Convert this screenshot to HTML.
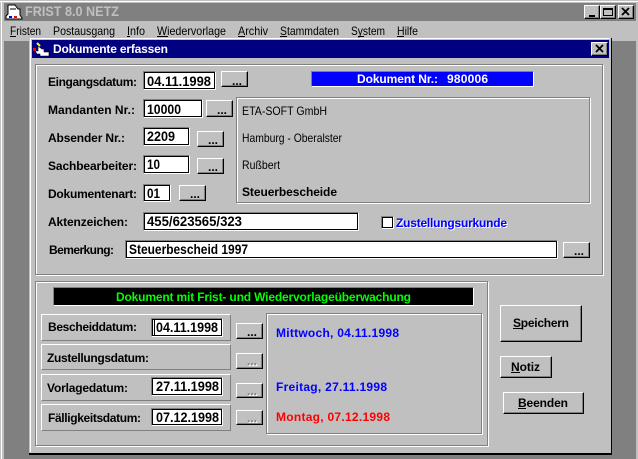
<!DOCTYPE html>
<html><head><meta charset="utf-8"><style>
html,body{margin:0;padding:0;width:638px;height:459px;overflow:hidden;background:#c0c0c0}
div{position:absolute;box-sizing:border-box}
.in{background:#fff;border:1px solid;border-color:#808080 #fff #fff #808080;box-shadow:inset 1px 1px 0 #000,inset -1px -1px 0 #000}
.btn{background:#c0c0c0;border:1px solid;border-color:#fff #000 #000 #fff;box-shadow:inset -1px -1px 0 #808080}
.pn{border:1px solid;border-color:#fff #808080 #808080 #fff}
.gr{border:1px solid #808080;box-shadow:1px 1px 0 #fff,inset 1px 1px 0 #fff}
svg{position:absolute;left:0;top:0}
text{font-family:"Liberation Sans",sans-serif;font-size:12px;fill:#000;white-space:pre}
.b{font-weight:bold}
.d{font-weight:bold;font-size:14px}
.bl{fill:#00f}.re{fill:#f00}.wh{fill:#fff}.gy{fill:#808080}
</style></head><body>
<div style="left:0;top:1px;width:638px;height:1px;background:#fff"></div>
<div style="left:1px;top:1px;width:1px;height:458px;background:#fff"></div>
<div style="left:4px;top:3px;width:632px;height:18px;background:#808080"></div>
<div style="left:4px;top:41px;width:632px;height:418px;background:#808080"></div>

<div class="btn" style="left:584px;top:5px;width:16px;height:14px"></div>
<div class="btn" style="left:600px;top:5px;width:16px;height:14px"></div>
<div class="btn" style="left:618px;top:5px;width:16px;height:14px"></div>

<div style="left:29px;top:38px;width:583px;height:417px;background:#c0c0c0;border-right:1px solid #000;border-bottom:2px solid #000"></div>
<div style="left:30px;top:38px;width:580px;height:414px;border-left:1px solid #fff;border-top:1px solid #fff"></div>
<div style="left:32px;top:40px;width:577px;height:18px;background:#000080"></div>
<div class="btn" style="left:591px;top:42px;width:17px;height:14px"></div>

<div class="gr" style="left:35px;top:64px;width:568px;height:211px"></div>
<div class="gr" style="left:35px;top:281px;width:453px;height:165px"></div>
<div class="gr" style="left:236px;top:97px;width:354px;height:106px"></div>

<div style="left:311px;top:71px;width:223px;height:16px;background:#00f;border:1px solid;border-color:#808080 #fff #fff #808080"></div>

<div class="in" style="left:143px;top:71px;width:73px;height:19px"></div>
<div class="btn" style="left:221px;top:71px;width:27px;height:16px"></div>
<div class="in" style="left:143px;top:99px;width:60px;height:19px"></div>
<div class="btn" style="left:206px;top:100px;width:27px;height:17px"></div>
<div class="in" style="left:143px;top:127px;width:47px;height:19px"></div>
<div class="btn" style="left:197px;top:131px;width:27px;height:16px"></div>
<div class="in" style="left:143px;top:155px;width:47px;height:19px"></div>
<div class="btn" style="left:197px;top:158px;width:27px;height:16px"></div>
<div class="in" style="left:143px;top:184px;width:28px;height:18px"></div>
<div class="btn" style="left:179px;top:185px;width:27px;height:16px"></div>
<div class="in" style="left:143px;top:212px;width:216px;height:19px"></div>
<div class="in" style="left:381px;top:216px;width:13px;height:13px"></div>
<div class="in" style="left:125px;top:240px;width:433px;height:19px"></div>
<div class="btn" style="left:563px;top:242px;width:27px;height:16px"></div>

<div style="left:53px;top:287px;width:421px;height:19px;background:#000;border:1px solid;border-color:#808080 #fff #fff #808080"></div>

<div class="pn" style="left:41px;top:314px;width:190px;height:27px"></div>
<div class="pn" style="left:41px;top:344px;width:190px;height:26px"></div>
<div class="pn" style="left:41px;top:374px;width:190px;height:27px"></div>
<div class="pn" style="left:41px;top:404px;width:190px;height:27px"></div>
<div class="in" style="left:151px;top:318px;width:72px;height:19px"></div>
<div class="in" style="left:151px;top:377px;width:72px;height:19px"></div>
<div class="in" style="left:151px;top:408px;width:72px;height:18px"></div>
<div style="left:154px;top:320px;width:1px;height:15px;background:#000"></div>
<div class="btn" style="left:236px;top:323px;width:27px;height:16px"></div>
<div class="btn" style="left:236px;top:353px;width:27px;height:16px"></div>
<div class="btn" style="left:236px;top:383px;width:27px;height:15px"></div>
<div class="btn" style="left:236px;top:410px;width:27px;height:15px"></div>
<div class="gr" style="left:266px;top:313px;width:216px;height:121px"></div>

<div class="btn" style="left:500px;top:305px;width:82px;height:37px"></div>
<div class="btn" style="left:500px;top:356px;width:52px;height:22px"></div>
<div class="btn" style="left:503px;top:392px;width:81px;height:22px"></div>

<svg width="638" height="459" viewBox="0 0 638 459">
<!-- main icon -->
<path d="M8 5h7l3 4h2v6l2 3v1H6v-3l2-2z" fill="#fff" stroke="#000" stroke-width="1"/>
<path d="M9 16h3v2H9z" fill="#00f"/><path d="M14 16h3v2h-3z" fill="#f00"/>
<path d="M10 9h6" stroke="#000"/>
<!-- dialog icon -->
<path d="M38 46l4 3h2v3h5v4h-9v-2h-3l-2-3h3z" fill="#fff" stroke="#000" stroke-width=".6"/>
<path d="M37 43l3 3" stroke="#ff0" stroke-width="2"/>
<path d="M33 48h3v3h-3z" fill="#f00"/>
<!-- caption glyphs -->
<rect x="589" y="15" width="6" height="2" fill="#000"/>
<path d="M603.5 8.500h9v7h-9z" fill="none" stroke="#000"/><rect x="603" y="8" width="10" height="2"/>
<path d="M622 8l7 7M629 8l-7 7" stroke="#000" stroke-width="1.800" fill="none"/>
<path d="M596 45l7 7M603 45l-7 7" stroke="#000" stroke-width="1.800" fill="none"/>

<text x="25" y="16" class="d" style="fill:#c0c0c0" textLength="94" lengthAdjust="spacingAndGlyphs">FRIST 8.0 NETZ</text>
<text x="10" y="35" textLength="31" lengthAdjust="spacingAndGlyphs">Fristen</text>
<text x="53" y="35" textLength="62" lengthAdjust="spacingAndGlyphs">Postausgang</text>
<text x="127" y="35" textLength="18" lengthAdjust="spacingAndGlyphs">Info</text>
<text x="157" y="35" textLength="69" lengthAdjust="spacingAndGlyphs">Wiedervorlage</text>
<text x="238" y="35" textLength="30" lengthAdjust="spacingAndGlyphs">Archiv</text>
<text x="280" y="35" textLength="59" lengthAdjust="spacingAndGlyphs">Stammdaten</text>
<text x="351" y="35" textLength="34" lengthAdjust="spacingAndGlyphs">System</text>
<text x="397" y="35" textLength="21" lengthAdjust="spacingAndGlyphs">Hilfe</text>
<g fill="#000">
<rect x="10" y="36" width="6" height="1"/><rect x="127" y="36" width="3" height="1"/><rect x="157" y="36" width="11" height="1"/><rect x="238" y="36" width="7" height="1"/><rect x="280" y="36" width="7" height="1"/><rect x="358" y="36" width="6" height="1"/><rect x="397" y="36" width="7" height="1"/>
<rect x="513" y="328" width="10" height="1"/><rect x="511" y="372" width="9" height="1"/><rect x="518" y="408" width="8" height="1"/>
</g>
<text x="53" y="53" class="b wh" textLength="115">Dokumente erfassen</text>

<text x="48" y="86" class="b" textLength="89">Eingangsdatum:</text>
<text x="48" y="114" class="b" textLength="87">Mandanten Nr.:</text>
<text x="48" y="142" class="b" textLength="77">Absender Nr.:</text>
<text x="48" y="170" class="b" textLength="89">Sachbearbeiter:</text>
<text x="48" y="198" class="b" textLength="89">Dokumentenart:</text>
<text x="48" y="226" class="b" textLength="80">Aktenzeichen:</text>
<text x="49" y="254" class="b" textLength="65">Bemerkung:</text>

<text x="147" y="86" class="d" textLength="64" lengthAdjust="spacingAndGlyphs">04.11.1998</text>
<text x="147" y="114" class="d" textLength="34" lengthAdjust="spacingAndGlyphs">10000</text>
<text x="147" y="141" class="d" textLength="28" lengthAdjust="spacingAndGlyphs">2209</text>
<text x="147" y="169" class="d" textLength="13" lengthAdjust="spacingAndGlyphs">10</text>
<text x="147" y="198" class="d" textLength="13" lengthAdjust="spacingAndGlyphs">01</text>
<text x="147" y="226" class="d" textLength="95" lengthAdjust="spacingAndGlyphs">455/623565/323</text>
<text x="129" y="254" class="d" textLength="119" lengthAdjust="spacingAndGlyphs">Steuerbescheid 1997</text>

<text x="232" y="85" class="b" textLength="10">...</text>
<text x="217" y="114" class="b" textLength="10">...</text>
<text x="208" y="144" class="b" textLength="10">...</text>
<text x="208" y="171" class="b" textLength="10">...</text>
<text x="190" y="198" class="b" textLength="10">...</text>
<text x="574" y="255" class="b" textLength="10">...</text>
<text x="247" y="336" class="b" textLength="10">...</text>
<text x="248" y="366" class="b" style="fill:#fff" textLength="10">...</text>
<text x="247" y="365" class="b gy" textLength="10">...</text>
<text x="248" y="396" class="b" style="fill:#fff" textLength="10">...</text>
<text x="247" y="395" class="b gy" textLength="10">...</text>
<text x="248" y="423" class="b" style="fill:#fff" textLength="10">...</text>
<text x="247" y="422" class="b gy" textLength="10">...</text>

<text x="357" y="83" class="b wh" textLength="81">Dokument Nr.:</text>
<text x="447" y="83" class="b wh" textLength="41">980006</text>

<text x="242" y="115" textLength="85" lengthAdjust="spacingAndGlyphs">ETA-SOFT GmbH</text>
<text x="242" y="142" textLength="100" lengthAdjust="spacingAndGlyphs">Hamburg - Oberalster</text>
<text x="242" y="169" textLength="38" lengthAdjust="spacingAndGlyphs">Rußbert</text>
<text x="242" y="196" class="b" textLength="95">Steuerbescheide</text>

<text x="397" y="228" class="b wh" textLength="111">Zustellungsurkunde</text>
<text x="396" y="227" class="b bl" textLength="111">Zustellungsurkunde</text>

<text x="116" y="301" class="b" style="fill:#0f0" textLength="295">Dokument mit Frist- und Wiedervorlageüberwachung</text>

<text x="48" y="331" class="b" textLength="89">Bescheiddatum:</text>
<text x="47" y="362" class="b" textLength="102">Zustellungsdatum:</text>
<text x="47" y="392" class="b" textLength="81">Vorlagedatum:</text>
<text x="48" y="422" class="b" textLength="93">Fälligkeitsdatum:</text>
<text x="156" y="332" class="d" textLength="62" lengthAdjust="spacingAndGlyphs">04.11.1998</text>
<text x="156" y="391" class="d" textLength="63" lengthAdjust="spacingAndGlyphs">27.11.1998</text>
<text x="156" y="422" class="d" textLength="63" lengthAdjust="spacingAndGlyphs">07.12.1998</text>

<text x="276" y="337" class="b bl" textLength="123">Mittwoch, 04.11.1998</text>
<text x="276" y="391" class="b bl" textLength="111">Freitag, 27.11.1998</text>
<text x="276" y="421" class="b re" textLength="114">Montag, 07.12.1998</text>

<text x="513" y="327" class="b" textLength="56">Speichern</text>
<text x="511" y="371" class="b" textLength="29">Notiz</text>
<text x="518" y="407" class="b" textLength="50">Beenden</text>
</svg>
</body></html>
